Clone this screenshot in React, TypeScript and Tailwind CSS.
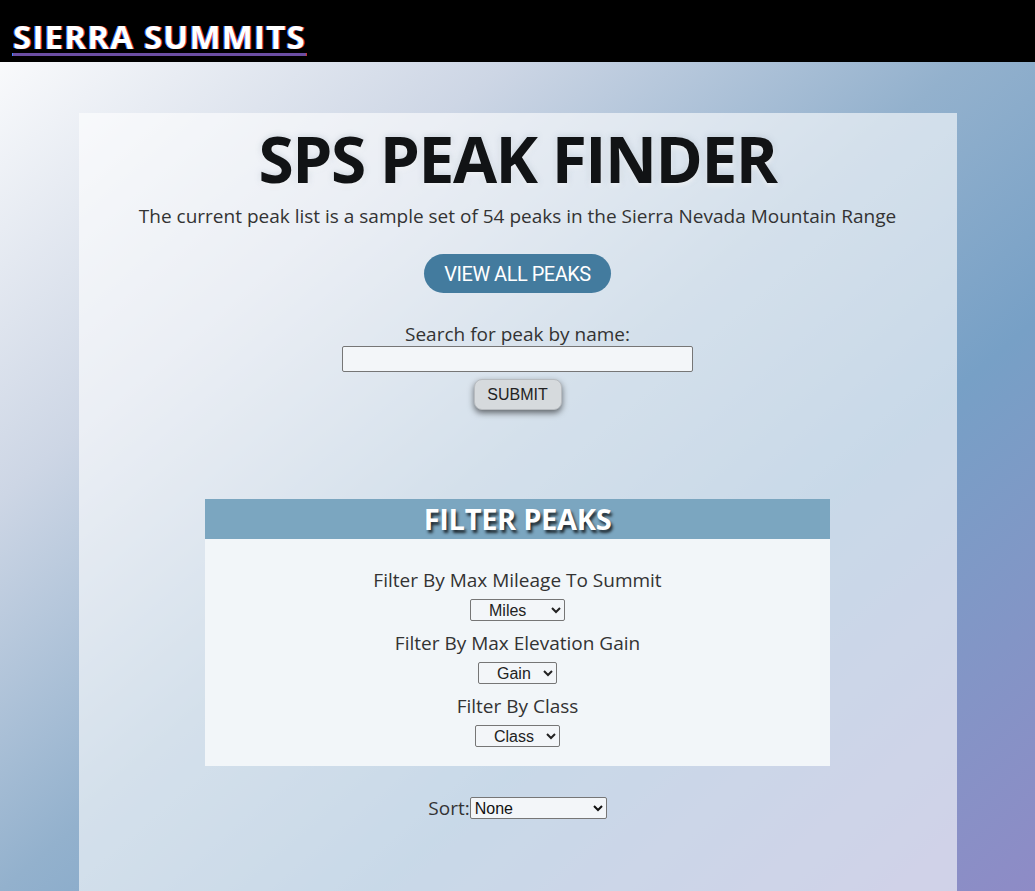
import React from 'react';

const SelectBox = ({ label, width }: { label: string; width: string }) => (
  <select
    className={`${width} h-[22px] border border-[#767676] rounded-[2px] bg-[#f3f6f9] text-[16px] text-[#222] pl-[14px] font-['Liberation_Sans',Arial,sans-serif]`}
    defaultValue={label}
  >
    <option>{label}</option>
  </select>
);

export default function App() {
  return (
    <div className="min-h-[891px] bg-[linear-gradient(to_bottom_right,#ffffff_0%,#cdd6e5_28%,#93b1cd_50%,#77a0c6_68%,#8e8bc6_100%)] font-['Open_Sans',sans-serif] text-[#222]">
      {/* Header */}
      <header className="h-[62px] bg-black px-[13px] pt-[17px]">
        <a
          href="#"
          className="text-[33px] font-bold leading-[40px] text-white underline decoration-[#6b4ea3] decoration-[3px] underline-offset-[4px] [text-shadow:1px_0_0_#e04040,-1px_0_0_#4080ff] tracking-[1.2px]"
        >
          SIERRA SUMMITS
        </a>
      </header>

      {/* Main card */}
      <main className="w-[878px] min-h-[778px] mx-auto mt-[51px] bg-white/60 flex flex-col items-center pb-10">
        <h1 className="mt-[8px] text-[64px] leading-[76px] font-bold text-[#111315] tracking-[-1.5px] [text-shadow:0_3px_5px_rgba(255,255,255,0.7),0_0_6px_rgba(120,140,160,0.35)]">
          SPS PEAK FINDER
        </h1>
        <p className="mt-[6px] text-[19px] leading-[26px] text-[#333]">
          The current peak list is a sample set of 54 peaks in the Sierra Nevada Mountain Range
        </p>

        <button className="mt-[25px] w-[187px] h-[39px] rounded-full bg-[#437b9e] text-white text-[20px] font-['Roboto',sans-serif] tracking-[-0.5px]">
          VIEW ALL PEAKS
        </button>

        <form className="mt-[29px] flex flex-col items-center">
          <label className="text-[19px] leading-[24px] text-[#333]">Search for peak by name:</label>
          <input className="w-[351px] h-[26px] border border-[#767676] rounded-[2px] bg-[#f3f6f9]" />
          <button
            type="button"
            className="mt-[7px] w-[88px] h-[31px] rounded-[8px] bg-[#d6dadd] text-[16px] text-[#222] font-['Liberation_Sans',Arial,sans-serif] shadow-[0_3px_6px_rgba(0,0,0,0.55)] border border-[#b8bcc0]"
          >
            SUBMIT
          </button>
        </form>

        {/* Filter box */}
        <section className="mt-[89px] w-[625px] bg-[#f2f6f9]">
          <h2 className="h-[40px] bg-[#7ba6c0] text-center text-white text-[29px] leading-[40px] font-bold tracking-[-0.3px] [text-shadow:2px_3px_3px_rgba(0,0,0,0.75)]">
            FILTER PEAKS
          </h2>
          <div className="flex flex-col items-center pt-[29px] pb-[19px] text-[19px] leading-[24px] text-[#333]">
            <span>Filter By Max Mileage To Summit</span>
            <div className="mt-[7px] flex"><SelectBox label="Miles" width="w-[95px]" /></div>
            <span className="mt-[10px]">Filter By Max Elevation Gain</span>
            <div className="mt-[7px] flex"><SelectBox label="Gain" width="w-[79px]" /></div>
            <span className="mt-[10px]">Filter By Class</span>
            <div className="mt-[7px] flex"><SelectBox label="Class" width="w-[85px]" /></div>
          </div>
        </section>

        <div className="mt-[31px] flex items-center text-[19px] leading-[22px] text-[#333]">
          <span>Sort:</span>
          <select className="w-[137px] h-[22px] border border-[#767676] rounded-[2px] bg-[#f3f6f9] text-[16px] text-[#111] font-['Liberation_Sans',Arial,sans-serif]">
            <option>None</option>
          </select>
        </div>
      </main>
    </div>
  );
}
